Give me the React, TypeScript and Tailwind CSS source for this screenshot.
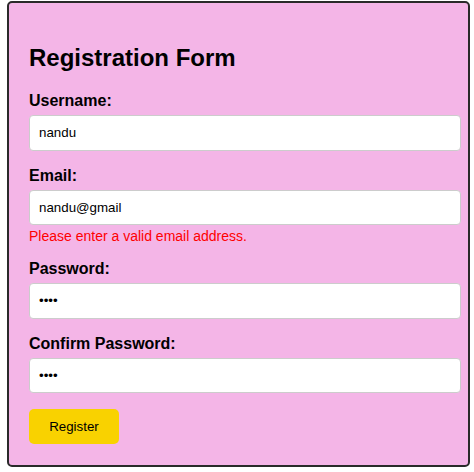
import React from "react";

const Field = ({
  label,
  type,
  value,
  children,
}: {
  label: string;
  type: string;
  value: string;
  children?: React.ReactNode;
}) => {
  return (
    <div className="mb-4">
      <label className="block text-[16px] leading-[18px] font-bold text-black mb-[5px]">
        {label}
      </label>
      <input
        type={type}
        defaultValue={value}
        readOnly
        className="block w-[432px] h-[35.5px] px-[9px] text-[13.33px] text-black bg-white border border-[#cccccc] rounded-[4px] outline-none"
      />
      {children}
    </div>
  );
};

const App = () => {
  return (
    <div className="min-h-[472px] bg-white pt-[1px] pl-[7px] font-['Liberation_Sans',Arial,sans-serif]">
      <div className="w-[463px] bg-[#f4b5e7] border-2 border-[#2a2a2a] rounded-[5px] pl-[20px] pr-[7px] pt-[20px] pb-[21px]">
        <h2 className="mt-[21px] mb-[20px] text-[24px] leading-[28px] font-bold text-black">
          Registration Form
        </h2>
        <Field label="Username:" type="text" value="nandu" />
        <Field label="Email:" type="email" value="nandu@gmail">
          <p className="mt-[3px] text-[14px] leading-[16px] text-[#ff0000]">
            Please enter a valid email address.
          </p>
        </Field>
        <Field label="Password:" type="password" value="1234" />
        <Field label="Confirm Password:" type="password" value="1234" />
        <button className="w-[90px] h-[35px] bg-[#f9d200] rounded-[5px] text-[13.33px] text-black">
          Register
        </button>
      </div>
    </div>
  );
};

export default App;
